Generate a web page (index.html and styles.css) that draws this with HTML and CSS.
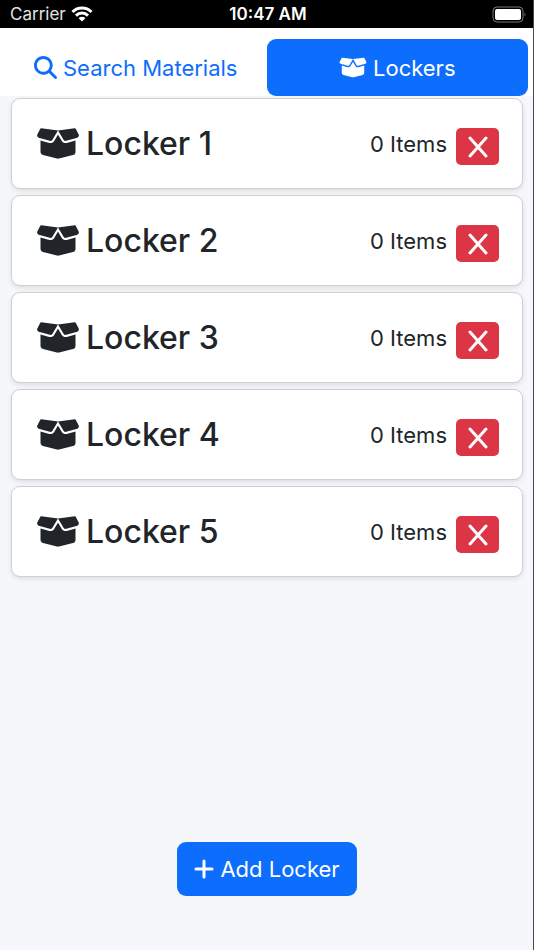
FILE: index.html
```
<!DOCTYPE html>
<html lang="en">
<head>
<meta charset="utf-8">
<meta name="viewport" content="width=device-width, initial-scale=1">
<title>Lockers</title>
<link rel="stylesheet" href="styles.css">
</head>
<body>
<svg class="defs" aria-hidden="true">
  <symbol id="box" viewBox="0 0 640 512"><path d="M58.900 42.100c3-6.100 9.600-9.600 16.300-8.700L320 64 564.800 33.400c6.700-.8 13.300 2.700 16.300 8.700l41.700 83.400c9 17.900-.6 39.600-19.800 45.100L439.600 217.300c-13.900 4-28.800-1.900-36.200-14.300L320 64 236.600 203c-7.400 12.400-22.300 18.300-36.200 14.300L37.100 170.600c-19.300-5.500-28.800-27.200-19.800-45.100L58.900 42.100zM321.100 128l54.900 91.400c14.900 24.800 44.600 36.600 72.500 28.600L576 211.600v167c0 22-15 41.200-36.400 46.600l-204.100 51c-10.200 2.600-20.900 2.600-31 0l-204.100-51C79 419.700 64 400.500 64 378.500v-167L191.600 248c27.800 8 57.600-3.800 72.500-28.600L318.900 128h2.200z"/></symbol>
  <symbol id="cross" viewBox="0 0 20 22"><path d="M2 2 18 20M18 2 2 20"/></symbol>
</svg>
<header class="status">
  <div class="carrier">Carrier
    <svg class="wifi" viewBox="0 0 22 16" aria-hidden="true"><path d="M1.500 6a13.500 13.500 0 0 1 19 0M5 9.600a8.500 8.500 0 0 1 12 0"/><path class="dot" d="M11 15.500 7.600 12.200a4.800 4.800 0 0 1 6.800 0z"/></svg>
  </div>
  <time>10:47 AM</time>
  <svg class="battery" viewBox="0 0 34 17" aria-hidden="true"><rect class="shell" x="1" y="1" width="30" height="15" rx="4"/><rect x="3" y="3" width="26" height="11" rx="2"/><path class="tip" d="M32.500 6.500q2 2 0 4z"/></svg>
</header>
<nav class="tabs">
  <a class="tab" href="#search"><svg class="search" viewBox="0 0 512 512" aria-hidden="true"><path d="M416 208c0 45.900-14.900 88.300-40 122.700L502.600 457.400c12.500 12.500 12.500 32.800 0 45.300s-32.800 12.500-45.300 0L330.700 376c-34.400 25.200-76.800 40-122.700 40C93.100 416 0 322.900 0 208S93.100 0 208 0S416 93.100 416 208zM208 352a144 144 0 1 0 0-288 144 144 0 1 0 0 288z"/></svg>Search Materials</a>
  <a class="tab active" href="#lockers" aria-current="page"><svg class="box-small" aria-hidden="true"><use href="#box"/></svg>Lockers</a>
</nav>
<main>
  <ul class="lockers">
    <li class="card"><svg class="box" aria-hidden="true"><use href="#box"/></svg><h2>Locker 1</h2><span class="count">0 Items</span><button class="remove" type="button" aria-label="Remove Locker 1"><svg aria-hidden="true"><use href="#cross"/></svg></button></li>
    <li class="card"><svg class="box" aria-hidden="true"><use href="#box"/></svg><h2>Locker 2</h2><span class="count">0 Items</span><button class="remove" type="button" aria-label="Remove Locker 2"><svg aria-hidden="true"><use href="#cross"/></svg></button></li>
    <li class="card"><svg class="box" aria-hidden="true"><use href="#box"/></svg><h2>Locker 3</h2><span class="count">0 Items</span><button class="remove" type="button" aria-label="Remove Locker 3"><svg aria-hidden="true"><use href="#cross"/></svg></button></li>
    <li class="card"><svg class="box" aria-hidden="true"><use href="#box"/></svg><h2>Locker 4</h2><span class="count">0 Items</span><button class="remove" type="button" aria-label="Remove Locker 4"><svg aria-hidden="true"><use href="#cross"/></svg></button></li>
    <li class="card"><svg class="box" aria-hidden="true"><use href="#box"/></svg><h2>Locker 5</h2><span class="count">0 Items</span><button class="remove" type="button" aria-label="Remove Locker 5"><svg aria-hidden="true"><use href="#cross"/></svg></button></li>
  </ul>
  <button class="add" type="button"><svg viewBox="0 0 20 20" aria-hidden="true"><path d="M10 2V18M2 10H18"/></svg>Add Locker</button>
</main>
</body>
</html>
```
FILE: styles.css
```
* {
  box-sizing: border-box;
}

body {
  margin: 0;
  min-height: 100vh;
  display: flex;
  flex-direction: column;
  background: #f5f7fb;
  border-right: 1px solid #4a4a4e;
  color: #212529;
  font-family: Inter, "Liberation Sans", sans-serif;
  font-size: 22px;
}

.defs {
  position: absolute;
  width: 0;
  height: 0;
}

svg {
  flex: none;
  fill: currentColor;
}

.status {
  display: grid;
  grid-template-columns: 1fr auto 1fr;
  align-items: center;
  height: 28px;
  padding: 0 7px 0 10px;
  background: #000;
  color: #fff;
  font-size: 17px;
}

.status time {
  font-weight: 600;
}

.carrier {
  display: flex;
  align-items: center;
  gap: 5px;
  color: #e4e4e4;
}

.wifi {
  width: 22px;
  height: 16px;
  fill: none;
  stroke: #fff;
  stroke-width: 3;
}

.wifi .dot {
  fill: #fff;
  stroke: none;
}

.battery {
  justify-self: end;
  width: 34px;
  height: 17px;
}

.battery .shell {
  fill: none;
  stroke: #77777b;
}

.battery .tip {
  fill: #77777b;
}

.tabs {
  display: grid;
  grid-template-columns: 1fr 1fr;
  padding: 11px 5px 0;
  background: #fff;
}

.tab {
  display: flex;
  align-items: center;
  justify-content: center;
  gap: 6px;
  height: 57px;
  border-radius: 9px;
  color: #0d6efd;
  text-decoration: none;
}

.tab.active {
  background: #0d6efd;
  color: #fff;
}

.search {
  width: 23px;
  height: 23px;
}

.box-small {
  width: 28px;
  height: 23px;
}

main {
  flex: 1;
  display: flex;
  flex-direction: column;
  align-items: center;
  justify-content: space-between;
  padding: 2px 10px 54px 11px;
}

.lockers {
  display: flex;
  flex-direction: column;
  gap: 6px;
  align-self: stretch;
  margin: 0;
  padding: 0;
  list-style: none;
}

.card {
  display: flex;
  align-items: center;
  height: 91px;
  padding: 0 23px 0 24px;
  background: #fff;
  border: 1px solid #cfd0d3;
  border-radius: 9px;
  box-shadow: 0 2px 5px rgba(0, 0, 0, 0.1);
}

.box {
  width: 44px;
  height: 35px;
}

h2 {
  flex: 1;
  margin: 0 0 0 6px;
  font-size: 32px;
  font-weight: 500;
}

.remove {
  display: flex;
  align-items: center;
  justify-content: center;
  width: 43px;
  height: 37px;
  margin: 6px 0 0 9px;
  padding: 0;
  border: 0;
  border-radius: 5px;
  background: #dc3545;
  color: #fff;
}

.remove svg {
  width: 20px;
  height: 22px;
  stroke: currentColor;
  stroke-width: 3;
  stroke-linecap: round;
}

.add {
  display: flex;
  align-items: center;
  gap: 6px;
  height: 54px;
  padding: 0 17px;
  border: 0;
  border-radius: 9px;
  background: #0d6efd;
  color: #fff;
  font: inherit;
}

.add svg {
  width: 20px;
  height: 20px;
  stroke: currentColor;
  stroke-width: 3;
  stroke-linecap: round;
}
```
